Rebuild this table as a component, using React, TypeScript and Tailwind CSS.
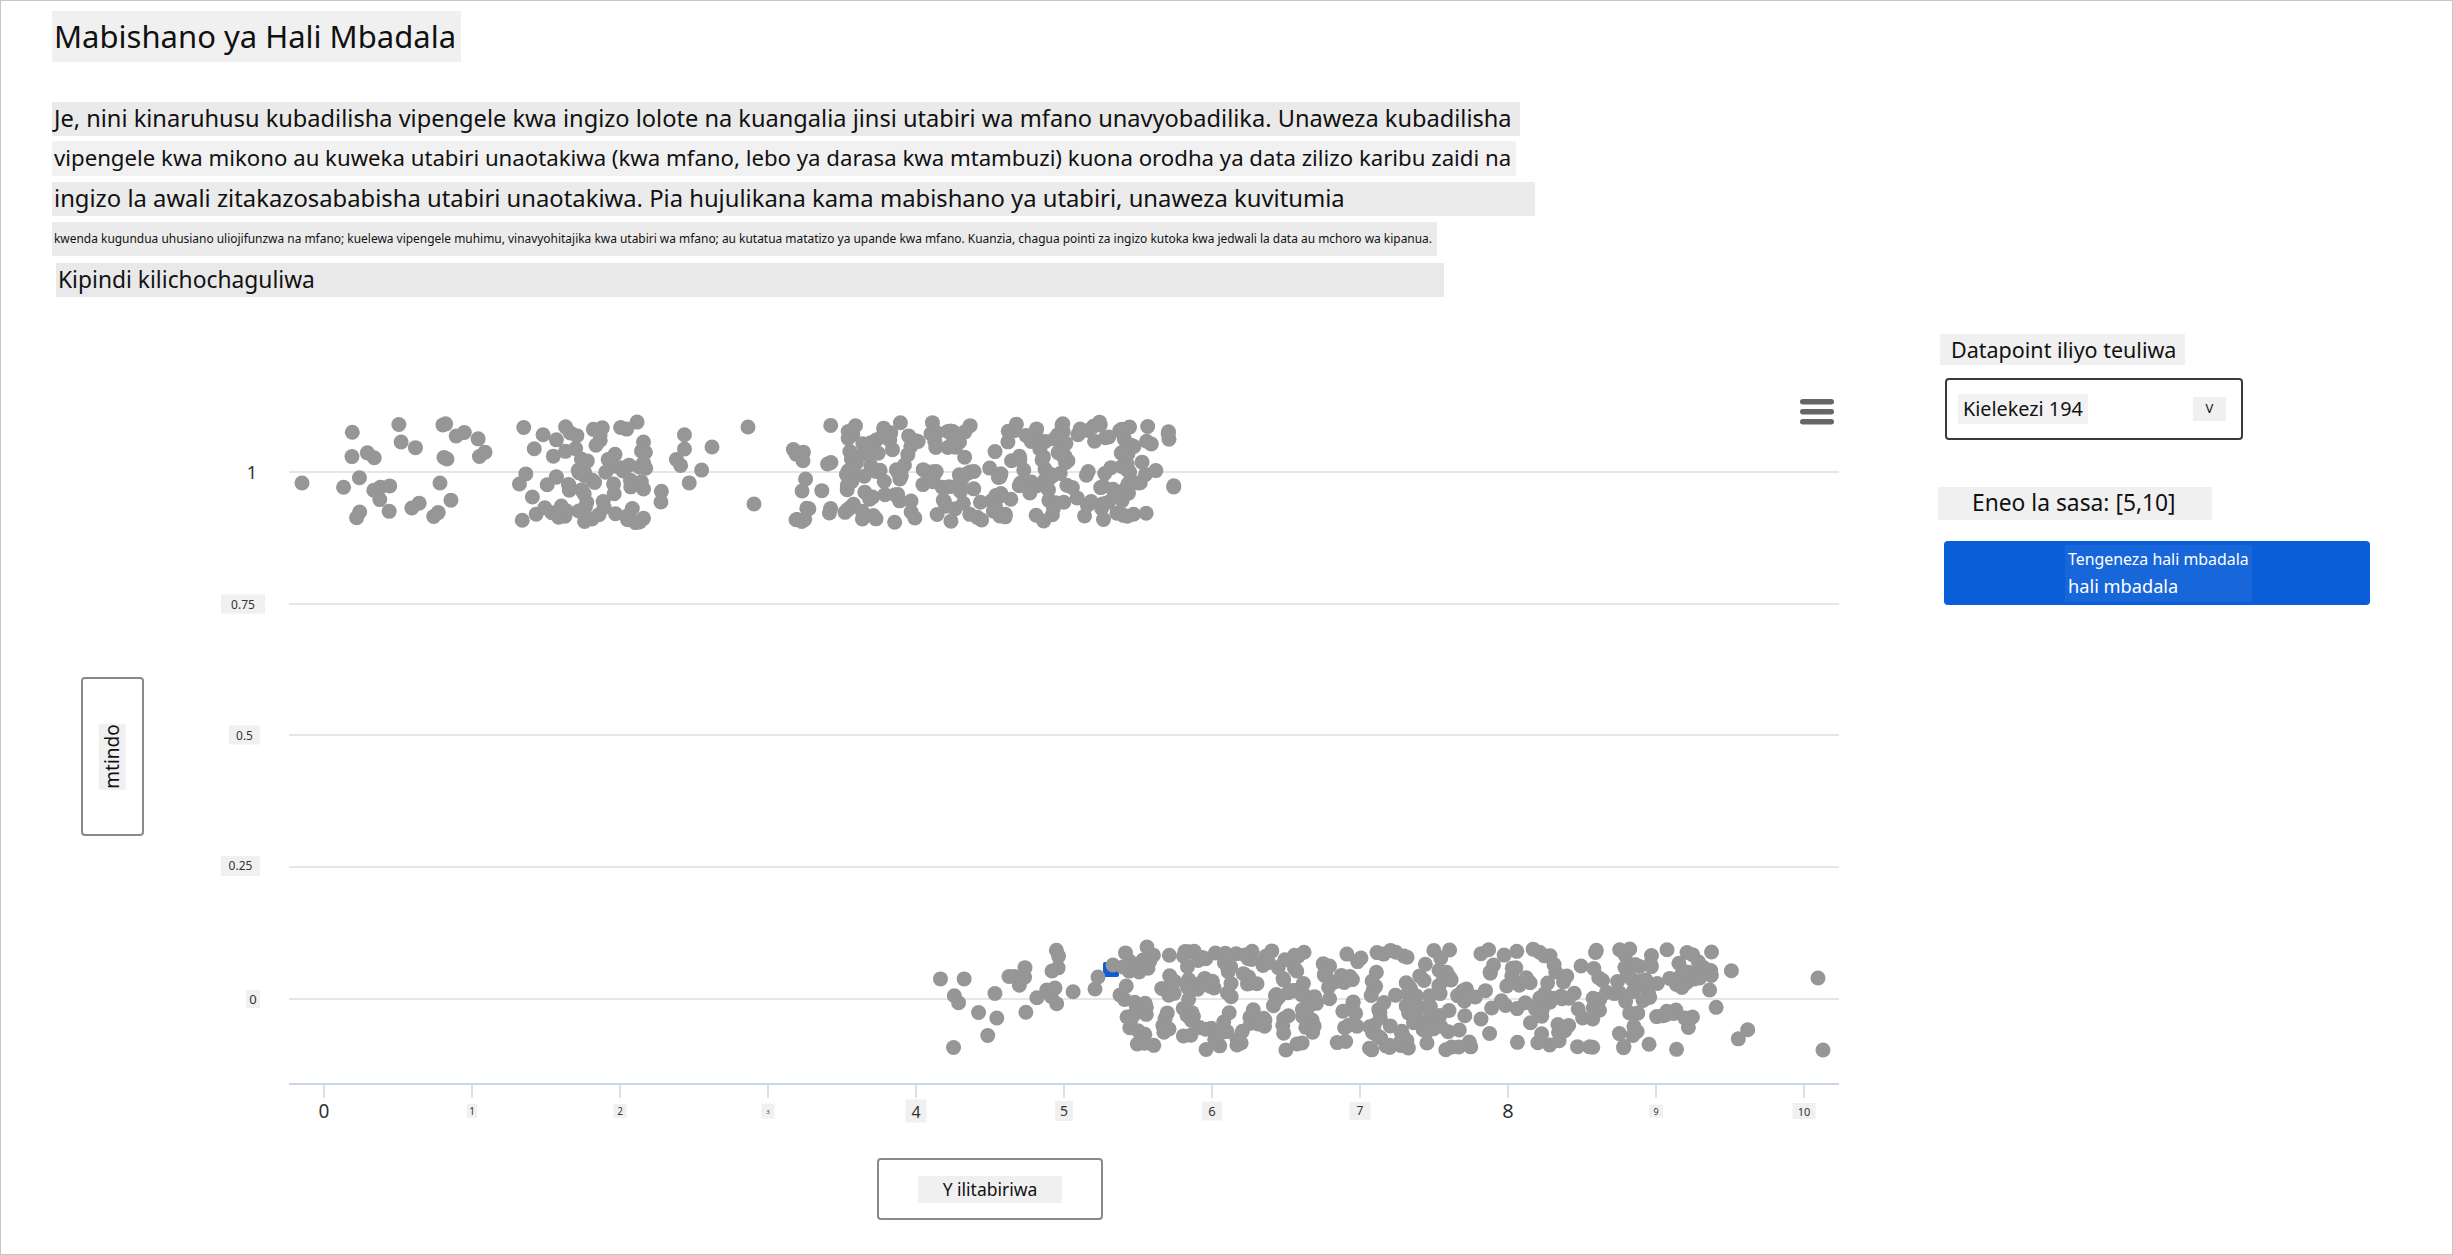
import React from "react";

type Pt = [number, number];

function mulberry32(seed: number) {
  let a = seed;
  return () => {
    a |= 0;
    a = (a + 0x6d2b79f5) | 0;
    let t = Math.imul(a ^ (a >>> 15), 1 | a);
    t = (t + Math.imul(t ^ (t >>> 7), 61 | t)) ^ t;
    return ((t ^ (t >>> 14)) >>> 0) / 4294967296;
  };
}

const rand = mulberry32(194);

function band(x0: number, x1: number, cy: number, n: number): Pt[] {
  const out: Pt[] = [];
  for (let i = 0; i < n; i++) {
    out.push([x0 + rand() * (x1 - x0), cy - 50 + rand() * 101]);
  }
  return out;
}

// page coordinates (the svg viewBox starts at y=297)
const upper: Pt[] = [
  [302, 483],
  ...band(338, 470, 472, 28),
  ...band(520, 650, 472, 60),
  ...band(470, 720, 472, 30),
  [712, 447],
  [748, 427],
  [754, 504],
  ...band(792, 860, 472, 24),
  ...band(845, 1130, 472, 215),
  ...band(1120, 1183, 472, 22),
];

const lower: Pt[] = [
  ...band(934, 1125, 999, 24),
  ...band(1125, 1410, 999, 205),
  ...band(1400, 1705, 999, 190),
  ...band(1705, 1750, 999, 8),
  [1818, 978],
  [1823, 1050],
];

const nearSelected: Pt[] = [
  [1052, 971],
  [1055, 988],
  [1098, 977],
  [1095, 989],
  [1113, 965],
  [1123, 967],
  [1120, 995],
  [1143, 960],
  [1147, 947],
];

const grid = [472, 604, 735, 867, 999];

// tick label boxes: size of the grey box and of the digits differ per label
const xTicks: { v: string; cls: string }[] = [
  { v: "0", cls: "h-[24px] w-[16px] text-[19px]" },
  { v: "1", cls: "h-[14px] w-[10px] bg-[#f0f0f0] text-[10px]" },
  { v: "2", cls: "h-[14px] w-[13px] bg-[#f0f0f0] text-[10px]" },
  { v: "3", cls: "h-[15px] w-[13px] bg-[#f0f0f0] text-[6px]" },
  { v: "4", cls: "h-[23px] w-[21px] bg-[#f0f0f0] text-[16px]" },
  { v: "5", cls: "h-[20px] w-[18px] bg-[#f0f0f0] text-[14px]" },
  { v: "6", cls: "h-[19px] w-[20px] bg-[#f0f0f0] text-[13px]" },
  { v: "7", cls: "h-[18px] w-[21px] bg-[#f0f0f0] text-[12px]" },
  { v: "8", cls: "h-[24px] w-[16px] text-[20px]" },
  { v: "9", cls: "h-[13px] w-[14px] bg-[#f0f0f0] text-[9px]" },
  { v: "10", cls: "h-[16px] w-[23px] bg-[#f0f0f0] text-[11px]" },
];

const yTicks: { v: string; y: number; right: number; cls: string }[] = [
  { v: "1", y: 472, right: 259, cls: "h-[24px] w-[14px] text-[18px]" },
  { v: "0.75", y: 604, right: 265, cls: "h-[19px] w-[44px] bg-[#f0f0f0] text-[12px]" },
  { v: "0.5", y: 735, right: 260, cls: "h-[19px] w-[31px] bg-[#f0f0f0] text-[12px]" },
  { v: "0.25", y: 866, right: 260, cls: "h-[20px] w-[39px] bg-[#f0f0f0] text-[12px]" },
  { v: "0", y: 999, right: 260, cls: "h-[18px] w-[14px] bg-[#f0f0f0] text-[13px]" },
];

const TOP = 297;

function Chart() {
  return (
    <div className="relative h-[958px] w-[1938px]">
      <svg
        className="absolute inset-0"
        width={1938}
        height={958}
        viewBox={`0 ${TOP} 1938 958`}
      >
        {grid.map((y) => (
          <line key={y} x1={289} x2={1839} y1={y} y2={y} stroke="#e6e6e6" strokeWidth={2} />
        ))}
        <line x1={289} x2={1839} y1={1084} y2={1084} stroke="#ccd6eb" strokeWidth={2} />
        {xTicks.map((_, i) => (
          <line
            key={i}
            x1={324 + 148 * i}
            x2={324 + 148 * i}
            y1={1084}
            y2={1098}
            stroke="#ccd6eb"
            strokeWidth={1.5}
          />
        ))}

        {/* chart menu */}
        <rect x={1800} y={399} width={34} height={5.5} rx={2.75} fill="#666" />
        <rect x={1800} y={409} width={34} height={5.5} rx={2.75} fill="#666" />
        <rect x={1800} y={419} width={34} height={5.5} rx={2.75} fill="#666" />

        {/* selected datapoint */}
        <rect x={1103} y={962} width={16} height={15} rx={2} fill="#0b5cd5" />

        {upper.map(([x, y], i) => (
          <circle key={`u${i}`} cx={x} cy={y} r={7.5} fill="#969696" />
        ))}
        {lower.map(([x, y], i) => (
          <circle key={`l${i}`} cx={x} cy={y} r={7.5} fill="#969696" />
        ))}
        {nearSelected.map(([x, y], i) => (
          <circle key={`s${i}`} cx={x} cy={y} r={7.5} fill="#969696" />
        ))}
      </svg>

      {xTicks.map((t, i) => (
        <span
          key={t.v}
          className={`absolute flex -translate-x-1/2 -translate-y-1/2 items-center justify-center leading-none text-[#333] ${t.cls}`}
          style={{ left: 324 + 148 * i, top: 1111 - TOP }}
        >
          {t.v}
        </span>
      ))}

      {yTicks.map((t) => (
        <span
          key={t.v}
          className={`absolute flex -translate-x-full -translate-y-1/2 items-center justify-center leading-none text-[#333] ${t.cls}`}
          style={{ left: t.right, top: t.y - TOP }}
        >
          {t.v}
        </span>
      ))}

      {/* y axis title */}
      <div className="absolute left-[81px] top-[380px] flex h-[159px] w-[63px] items-center justify-center rounded-[4px] border-2 border-[#8a8a8a]">
        <span className="-rotate-90 bg-[#f0f0f0] px-[1px] text-[19px] leading-[27px] text-[#111]">
          mtindo
        </span>
      </div>

      {/* x axis title */}
      <div className="absolute left-[877px] top-[861px] flex h-[62px] w-[226px] items-center justify-center rounded-[4px] border-2 border-[#8a8a8a]">
        <span className="bg-[#f0f0f0] px-[25px] text-[17.5px] leading-[27px] text-[#111]">
          Y ilitabiriwa
        </span>
      </div>
    </div>
  );
}

export default function App() {
  return (
    <div className="relative h-[1255px] w-full overflow-hidden bg-white font-['Noto_Sans',sans-serif] text-[#111] shadow-[inset_0_0_0_1px_#c6c6c6]">
      <div className="flex">
        <div className="w-[1938px] shrink-0">
          <header className="flex h-[297px] flex-col items-start whitespace-nowrap pl-[52px] pt-[11px]">
            <h1 className="flex h-[51px] w-[409px] items-center bg-[#f0f0f0] pl-[2px] text-[31px] font-normal leading-none">
              Mabishano ya Hali Mbadala
            </h1>
            <p className="mt-[40px] flex h-[34px] w-[1468px] items-center bg-[#eaeaea] pl-[2px] text-[23.6px] leading-none">
              Je, nini kinaruhusu kubadilisha vipengele kwa ingizo lolote na kuangalia jinsi utabiri wa mfano unavyobadilika. Unaweza kubadilisha
            </p>
            <p className="mt-[5px] flex h-[35px] w-[1464px] items-center bg-[#f1f1f1] pl-[2px] text-[22.2px] leading-none">
              vipengele kwa mikono au kuweka utabiri unaotakiwa (kwa mfano, lebo ya darasa kwa mtambuzi) kuona orodha ya data zilizo karibu zaidi na
            </p>
            <p className="mt-[6px] flex h-[34px] w-[1483px] items-center bg-[#ebebeb] pl-[2px] text-[23.8px] leading-none">
              ingizo la awali zitakazosababisha utabiri unaotakiwa. Pia hujulikana kama mabishano ya utabiri, unaweza kuvitumia
            </p>
            <p className="mt-[6px] flex h-[34px] w-[1385px] items-center bg-[#ebebeb] pl-[2px] text-[11.95px] leading-none">
              kwenda kugundua uhusiano uliojifunzwa na mfano; kuelewa vipengele muhimu, vinavyohitajika kwa utabiri wa mfano; au kutatua matatizo ya upande kwa mfano. Kuanzia, chagua pointi za ingizo kutoka kwa jedwali la data au mchoro wa kipanua.
            </p>
            <h2 className="ml-[4px] mt-[7px] flex h-[34px] w-[1388px] items-center bg-[#e9e9e9] pl-[2px] text-[22.8px] font-normal leading-none">
              Kipindi kilichochaguliwa
            </h2>
          </header>
          <Chart />
        </div>

        <aside className="flex flex-col items-start whitespace-nowrap pt-[334px]">
          <div className="ml-[2px] flex h-[31px] w-[245px] items-center bg-[#f0f0f0] pl-[11px] text-[21.5px] leading-none">
            Datapoint iliyo teuliwa
          </div>
          <div className="ml-[7px] mt-[13px] flex h-[62px] w-[298px] items-center justify-between rounded-[4px] border-2 border-[#3a3a3a] pl-[11px] pr-[15px]">
            <span className="flex h-[30px] items-center bg-[#f2f2f2] px-[5px] text-[19.8px] leading-none">
              Kielekezi 194
            </span>
            <span className="flex h-[24px] w-[33px] items-start justify-center bg-[#f0f0f0] pt-[5px] text-[13px] leading-none">
              V
            </span>
          </div>
          <div className="mt-[47px] flex h-[33px] w-[274px] items-center bg-[#f0f0f0] pl-[34px] text-[22.8px] leading-none">
            Eneo la sasa: [5,10]
          </div>
          <button className="ml-[6px] mt-[21px] flex h-[64px] w-[426px] items-center rounded-[4px] bg-[#0a5fd9] pl-[121px] text-white">
            <span className="flex h-[57px] w-[187px] flex-col items-start justify-center bg-[#1766da] pl-[3px] text-left">
              <span className="text-[15.9px] leading-[26px]">Tengeneza hali mbadala</span>
              <span className="text-[18.2px] leading-[28px]">hali mbadala</span>
            </span>
          </button>
        </aside>
      </div>
    </div>
  );
}
